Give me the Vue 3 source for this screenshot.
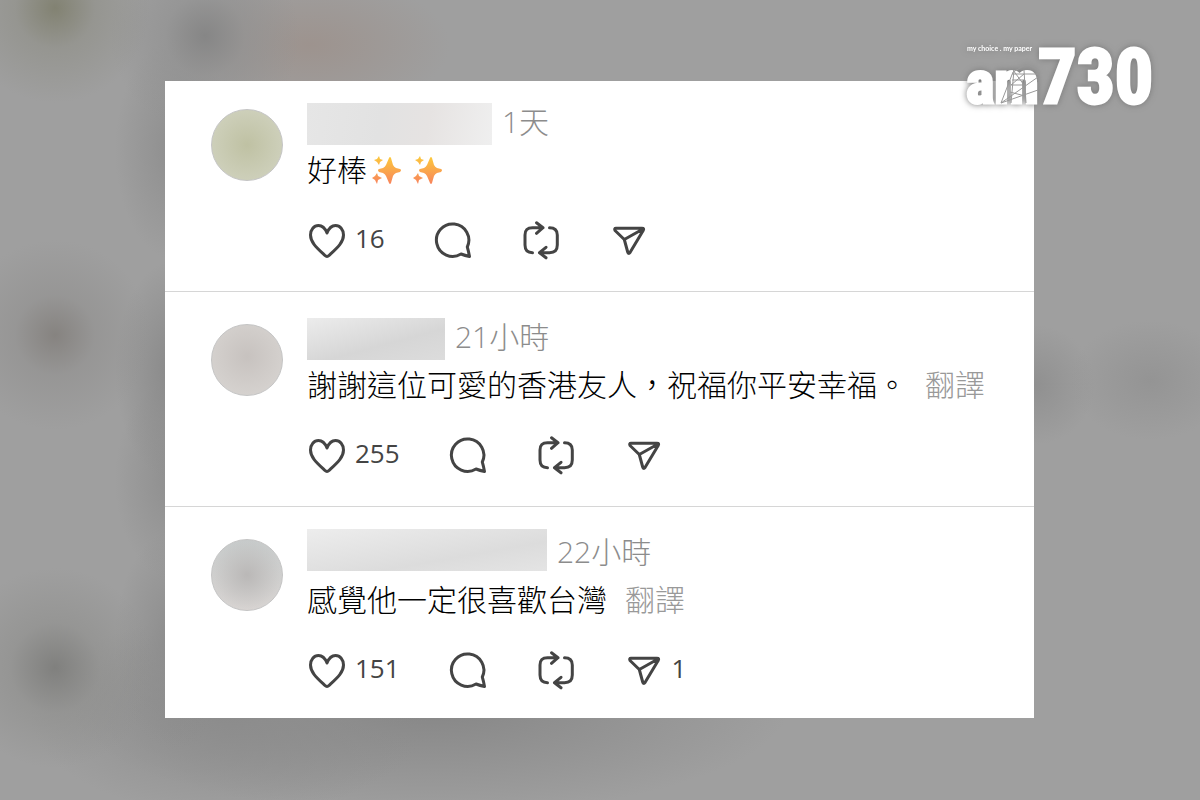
<script setup>
import { ref } from "vue";

// The comments
const comments = ref([
  {
    id: 1,
    tone: "olive",
    nameWidth: 185,
    time: "1天",
    content: "好棒",
    sparkles: 2,
    likes: 16,
    liked: false,
  },
  {
    id: 2,
    tone: "sand",
    nameWidth: 138,
    time: "21小時",
    content: "謝謝這位可愛的香港友人，祝福你平安幸福。",
    translate: true,
    likes: 255,
    liked: false,
  },
  {
    id: 3,
    tone: "slate",
    nameWidth: 240,
    raised: true,
    time: "22小時",
    content: "感覺他一定很喜歡台灣",
    translate: true,
    likes: 151,
    liked: false,
    shares: 1,
  },
]);

// Toggle like for each comment
const toggleLike = (comment) => {
  comment.liked = !comment.liked;
  comment.likes += comment.liked ? 1 : -1;
};
</script>

<template>
  <main class="page" lang="zh-TW">
    <svg class="logo" viewBox="0 0 190 80" role="img" aria-label="am730">
      <text class="tagline" x="4" y="17">my choice . my paper</text>
      <text class="logo-am" x="3" y="69">am</text>
      <text class="logo-number" x="75" y="69">730</text>
      <path
        class="tower"
        d="M38 69 L50 38 L64 30 L76 36 M48 69 L51 36 M63 69 L61 36 M49 40 H75 M49 46 H62 M48 51 H62 M47 58 L62 62 M50 36 L61 51 M61 40 L48 51 M38 69 L75 43 M38 69 L75 56"
      />
    </svg>

    <ul class="panel">
      <li v-for="comment in comments" :key="comment.id" class="comment">
        <div class="avatar" :class="comment.tone"></div>
        <div class="body">
          <header class="meta">
            <span
              class="name"
              :class="[comment.tone, { raised: comment.raised }]"
              :style="{ width: comment.nameWidth + 'px' }"
            ></span>
            <time class="time">{{ comment.time }}</time>
          </header>

          <p class="content">
            <span>{{ comment.content }}</span>
            <span v-if="comment.sparkles" class="sparkles">
              <svg
                v-for="n in comment.sparkles"
                :key="n"
                class="sparkle"
                viewBox="0 0 32 32"
                role="img"
                aria-label="✨"
              >
                <defs>
                  <linearGradient :id="'glow' + n" x1="0" y1="0" x2="0" y2="1">
                    <stop offset="0" stop-color="#fcc93c" />
                    <stop offset="1" stop-color="#f8845c" />
                  </linearGradient>
                </defs>
                <g :fill="`url(#glow${n})`">
                  <path
                    d="M18 4 Q19 2 20 4 L22 11 Q23 13 25 14 L29 15 Q31 16 29 18 L25 19 Q23 20 22 22 L20 29 Q19 31 18 29 L15 22 Q14 20 12 19 L8 18 Q6 16 8 15 L12 14 Q14 13 15 11 Z"
                  />
                  <path
                    d="M8 2 L9 5 L12 6 L9 8 L8 11 L6 8 L3 6 L6 5 Z M6 19 L7 22 L11 24 L7 26 L6 30 L4 26 L1 24 L4 22 Z"
                  />
                </g>
              </svg>
            </span>
            <a v-if="comment.translate" class="translate" href="#">翻譯</a>
          </p>

          <div class="actions">
            <button
              class="action"
              type="button"
              aria-label="讚"
              @click="toggleLike(comment)"
            >
              <svg class="icon" viewBox="0 0 40 40">
                <path
                  d="M20 12 C18 7 15 4.5 11.5 4.5 C7 4.5 3.5 8.5 3.5 14 C3.5 21.5 10 27 18 34.5 Q20 36.5 22 34.5 C30 27 36.5 21.5 36.5 14 C36.5 8.5 33 4.5 28.5 4.5 C25 4.5 22 7 20 12 Z"
                />
              </svg>
              <span class="count">{{ comment.likes }}</span>
            </button>
            <button class="action" type="button" aria-label="回覆">
              <svg class="icon" viewBox="0 0 40 40">
                <path
                  d="M34.3 26 A16.2 16.2 0 1 0 28 33 Q32 34.5 36.5 35.5 Q35.5 30 34.3 26 Z"
                />
              </svg>
            </button>
            <button class="action" type="button" aria-label="轉發">
              <svg class="icon" viewBox="0 0 40 40">
                <path
                  d="M11.5 31.7 Q4 31.7 4 24 V14 Q4 6.7 11.5 6.7 H22 M15.5 1.8 L22 6.7 L15.5 12.3 M28.5 6.7 Q36.3 6.7 36.3 14 V24 Q36.3 31.7 28.5 31.7 H18.5 M25 26.3 L18.5 31.7 L25 36.8"
                />
              </svg>
            </button>
            <button class="action" type="button" aria-label="分享">
              <svg class="icon" viewBox="0 0 40 40">
                <path
                  d="M7 7.2 H33 Q35.5 7.2 34.2 9.5 L21 31.5 Q19.5 33.5 18.7 31 L15.3 18.5 L6 9.5 Q5 7.2 7 7.2 Z M15.3 18.5 L34 8"
                />
              </svg>
              <span v-if="comment.shares" class="count">{{
                comment.shares
              }}</span>
            </button>
          </div>
        </div>
      </li>
    </ul>
  </main>
</template>

<style>
body {
  background: #9f9f9f;
}
</style>

<style scoped>
.page {
  position: relative;
  box-sizing: border-box;
  min-height: 100vh;
  padding: 81px 166px 81px 165px;
  font-family: "Open Sans", "Noto Sans CJK TC", sans-serif;
  background:
    radial-gradient(circle at 55px 8px, #828272, #8f8f8799 40px, #9f9f9f00 95px),
    radial-gradient(circle at 205px 36px, #868686, #90909099 40px, #9f9f9f00 95px),
    radial-gradient(ellipse 140px 70px at 310px 45px, #9d938e, #9f9f9f00),
    radial-gradient(circle at 55px 335px, #868380, #91908f99 40px, #9f9f9f00 95px),
    radial-gradient(circle at 55px 668px, #80807e, #8f8f8d99 45px, #9f9f9f00 100px),
    radial-gradient(ellipse 60px 110px at 175px 150px, #8e8e8e, #9f9f9f00),
    radial-gradient(ellipse 60px 110px at 175px 370px, #888888, #9f9f9f00),
    radial-gradient(ellipse 60px 100px at 175px 480px, #8e8e8e, #9f9f9f00),
    radial-gradient(ellipse 60px 110px at 175px 640px, #8c8c8c, #9f9f9f00),
    radial-gradient(ellipse 200px 100px at 230px 715px, #8c8c8c, #9f9f9f00),
    radial-gradient(ellipse 360px 110px at 430px 705px, #868686, #9f9f9f00),
    radial-gradient(ellipse 80px 60px at 1150px 380px, #949494, #9f9f9f00),
    radial-gradient(ellipse 60px 60px at 1035px 385px, #909090, #9f9f9f00),
    #9f9f9f;
}

.logo {
  position: absolute;
  top: 34px;
  right: 47px;
  width: 190px;
  height: 80px;
  fill: #fff;
  overflow: visible;
  filter: drop-shadow(0 0 3px #777);
}

.tagline {
  font-family: Lato, sans-serif;
  font-size: 7px;
  font-weight: 700;
}

.logo-am,
.logo-number {
  font-family: "Liberation Sans Narrow", "Roboto Condensed", "Open Sans",
    sans-serif;
  font-weight: 700;
  stroke: #fff;
  stroke-width: 3;
}

.logo-am {
  font-size: 60px;
}

.logo-number {
  font-size: 76px;
}

.tower {
  fill: none;
  stroke: #999;
  stroke-width: 1;
}

.panel {
  margin: 0;
  padding: 0;
  list-style: none;
  background: #fff;
}

.comment {
  display: flex;
  gap: 24px;
  padding: 22px 24px 30px 46px;
  border-bottom: 1px solid #d6d6d6;
}

.comment:first-child {
  padding-top: 18px;
}

.comment:last-child {
  padding-bottom: 27px;
  border-bottom: none;
}

.avatar {
  flex: none;
  box-sizing: border-box;
  width: 72px;
  height: 72px;
  margin-top: 10px;
  border: 1px solid #c4c4c4;
  border-radius: 50%;
}

.avatar.olive {
  background: radial-gradient(circle, #bfc1a3, #d3d5c3);
}

.avatar.sand {
  background: radial-gradient(circle at 50% 45%, #c7c2bf, #dad7d4);
}

.avatar.slate {
  background: radial-gradient(circle, #bab8b7, transparent 75%),
    linear-gradient(#c8cccc, #dad6d4);
}

.body {
  flex: 1;
  min-width: 0;
}

.meta {
  display: flex;
  align-items: center;
  gap: 10px;
  height: 46px;
}

.name {
  align-self: flex-end;
  height: 42px;
}

.name.raised {
  align-self: flex-start;
}

.name.olive {
  background: linear-gradient(100deg, #e6e6e6, #e2e2e2 40%, #e6e3e2 65%, #efefef);
}

.name.sand {
  background: linear-gradient(165deg, #ececec, #d6d6d6 60%, #dcdcdc);
}

.name.slate {
  background: linear-gradient(170deg, #ededed, #dcdcdc 65%, #e4e4e4);
}

.time {
  font-size: 30px;
  font-weight: 300;
  line-height: 40px;
  color: #8c8c8c;
}

.content {
  display: flex;
  align-items: center;
  gap: 18px;
  margin: 5px 0 31px;
  font-size: 30px;
  font-weight: 300;
  line-height: 40px;
  color: #000;
}

.sparkles {
  display: flex;
  gap: 9px;
  margin-left: -14px;
}

.sparkle {
  width: 32px;
  height: 32px;
}

.translate {
  color: #999;
  text-decoration: none;
}

.actions {
  display: flex;
  gap: 48px;
}

.action {
  display: flex;
  gap: 8px;
  padding: 0;
  border: none;
  background: none;
  font: inherit;
  color: #444;
  cursor: pointer;
}

.icon {
  width: 40px;
  height: 40px;
  fill: none;
  stroke: #444;
  stroke-width: 3;
  stroke-linecap: round;
  stroke-linejoin: round;
}

.count {
  font-size: 26px;
  line-height: 34px;
}
</style>
